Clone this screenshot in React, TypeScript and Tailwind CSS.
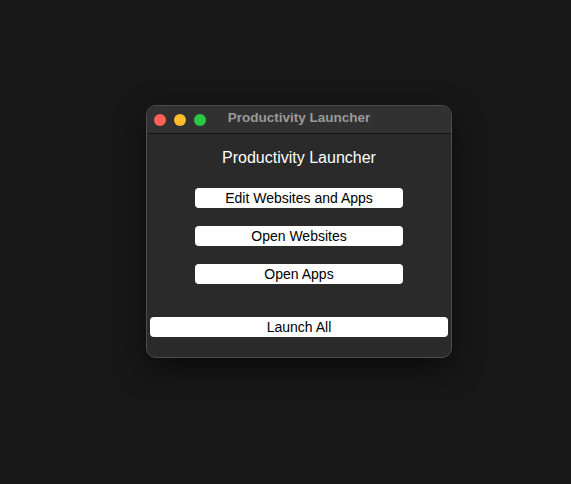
export default function App() {
  const buttons = ["Edit Websites and Apps", "Open Websites", "Open Apps"];

  return (
    <div className="min-h-[484px] w-full bg-[#181818] pt-[105px] pl-[146px] font-['Liberation_Sans',Arial,sans-serif]">
      <div className="w-[306px] h-[253px] rounded-[10px] border border-[#4d4d4d] bg-[#2a2a2a] overflow-hidden shadow-[0_10px_30px_rgba(0,0,0,0.6)] flex flex-col">
        {/* title bar */}
        <div className="h-[28px] shrink-0 relative flex items-center border-b border-[#161616] bg-[#323131]">
          <div className="flex gap-[8px] pl-[7px]">
            <span className="block size-[12px] rounded-full bg-[#fe5f57]" />
            <span className="block size-[12px] rounded-full bg-[#febc2e]" />
            <span className="block size-[12px] rounded-full bg-[#28c840]" />
          </div>
          <div className="absolute inset-0 flex items-center justify-center pb-[2px] text-[13.5px] font-bold text-[#9a9a9a]">
            Productivity Launcher
          </div>
        </div>

        <div className="flex flex-col items-center pt-[14px]">
          <div className="text-[16px] leading-[20px] text-white">Productivity Launcher</div>
          <div className="mt-[20px] flex flex-col gap-[18px]">
            {buttons.map((b) => (
              <button
                key={b}
                className="w-[208px] h-[20px] rounded-[4px] bg-white text-[14px] leading-[20px] text-black"
              >
                {b}
              </button>
            ))}
          </div>
          <button className="mt-[33px] w-[298px] h-[20px] rounded-[4px] bg-white text-[14px] leading-[20px] text-black">
            Launch All
          </button>
        </div>
      </div>
    </div>
  );
}
